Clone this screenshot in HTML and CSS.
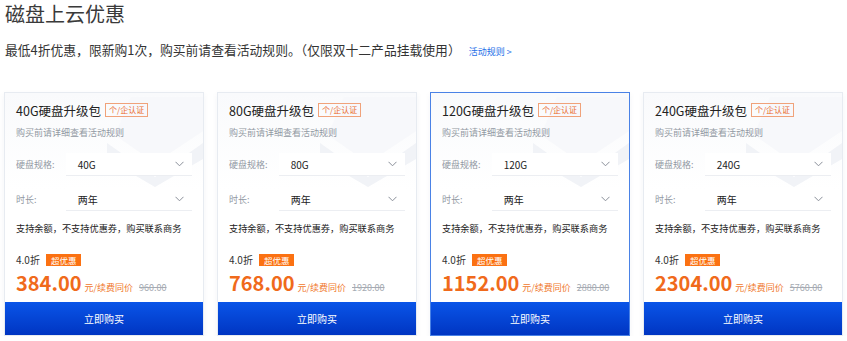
FILE: index.html
```html
<!DOCTYPE html>
<html lang="zh-CN">
<head>
    <meta charset="UTF-8">
    <title>磁盘上云优惠</title>
    <link rel="stylesheet" href="styles.css">
</head>
<body>
    <h1 class="page-title">磁盘上云优惠</h1>
    <p class="page-desc">最低4折优惠，限新购1次，购买前请查看活动规则。（仅限双十二产品挂载使用）<a class="rule-link" href="#">活动规则 &gt;</a></p>

    <div class="card-list">
        <!-- 40G -->
        <div class="card">
            <svg class="card-deco" width="96" height="90" viewBox="0 0 96 90"><path d="M0 46 L48 80 L96 46 L96 62 L48 90 L0 62 Z" fill="#f1f3f7"/><path d="M24 0 L96 0 L96 34 L48 66 L8 38 Z" fill="#f7f8fb"/></svg>
            <div class="card-body">
                <div class="card-head"><span class="card-name">40G硬盘升级包</span><span class="auth-tag">个/企认证</span></div>
                <div class="card-sub">购买前请详细查看活动规则</div>
                <div class="field"><span class="field-label">硬盘规格:</span><div class="select"><span>40G</span><svg class="chevron" width="9" height="6" viewBox="0 0 9 6"><path d="M0.5 0.8 L4.5 4.8 L8.5 0.8" fill="none" stroke="#8a8f99" stroke-width="1"/></svg></div></div>
                <div class="field"><span class="field-label">时长:</span><div class="select"><span>两年</span><svg class="chevron" width="9" height="6" viewBox="0 0 9 6"><path d="M0.5 0.8 L4.5 4.8 L8.5 0.8" fill="none" stroke="#8a8f99" stroke-width="1"/></svg></div></div>
                <div class="card-note">支持余额，不支持优惠券，购买联系商务</div>
                <div class="discount"><span>4.0折</span><span class="hot-tag">超优惠</span></div>
                <div class="price-row"><span class="price">384.00</span><span class="unit">元/续费同价</span><span class="old-price">960.00</span></div>
            </div>
            <button class="buy-btn">立即购买</button>
        </div>

        <!-- 80G -->
        <div class="card">
            <svg class="card-deco" width="96" height="90" viewBox="0 0 96 90"><path d="M0 46 L48 80 L96 46 L96 62 L48 90 L0 62 Z" fill="#f1f3f7"/><path d="M24 0 L96 0 L96 34 L48 66 L8 38 Z" fill="#f7f8fb"/></svg>
            <div class="card-body">
                <div class="card-head"><span class="card-name">80G硬盘升级包</span><span class="auth-tag">个/企认证</span></div>
                <div class="card-sub">购买前请详细查看活动规则</div>
                <div class="field"><span class="field-label">硬盘规格:</span><div class="select"><span>80G</span><svg class="chevron" width="9" height="6" viewBox="0 0 9 6"><path d="M0.5 0.8 L4.5 4.8 L8.5 0.8" fill="none" stroke="#8a8f99" stroke-width="1"/></svg></div></div>
                <div class="field"><span class="field-label">时长:</span><div class="select"><span>两年</span><svg class="chevron" width="9" height="6" viewBox="0 0 9 6"><path d="M0.5 0.8 L4.5 4.8 L8.5 0.8" fill="none" stroke="#8a8f99" stroke-width="1"/></svg></div></div>
                <div class="card-note">支持余额，不支持优惠券，购买联系商务</div>
                <div class="discount"><span>4.0折</span><span class="hot-tag">超优惠</span></div>
                <div class="price-row"><span class="price">768.00</span><span class="unit">元/续费同价</span><span class="old-price">1920.00</span></div>
            </div>
            <button class="buy-btn">立即购买</button>
        </div>

        <!-- 120G (选中) -->
        <div class="card active">
            <svg class="card-deco" width="96" height="90" viewBox="0 0 96 90"><path d="M0 46 L48 80 L96 46 L96 62 L48 90 L0 62 Z" fill="#f1f3f7"/><path d="M24 0 L96 0 L96 34 L48 66 L8 38 Z" fill="#f7f8fb"/></svg>
            <div class="card-body">
                <div class="card-head"><span class="card-name">120G硬盘升级包</span><span class="auth-tag">个/企认证</span></div>
                <div class="card-sub">购买前请详细查看活动规则</div>
                <div class="field"><span class="field-label">硬盘规格:</span><div class="select"><span>120G</span><svg class="chevron" width="9" height="6" viewBox="0 0 9 6"><path d="M0.5 0.8 L4.5 4.8 L8.5 0.8" fill="none" stroke="#8a8f99" stroke-width="1"/></svg></div></div>
                <div class="field"><span class="field-label">时长:</span><div class="select"><span>两年</span><svg class="chevron" width="9" height="6" viewBox="0 0 9 6"><path d="M0.5 0.8 L4.5 4.8 L8.5 0.8" fill="none" stroke="#8a8f99" stroke-width="1"/></svg></div></div>
                <div class="card-note">支持余额，不支持优惠券，购买联系商务</div>
                <div class="discount"><span>4.0折</span><span class="hot-tag">超优惠</span></div>
                <div class="price-row"><span class="price">1152.00</span><span class="unit">元/续费同价</span><span class="old-price">2880.00</span></div>
            </div>
            <button class="buy-btn">立即购买</button>
        </div>

        <!-- 240G -->
        <div class="card">
            <svg class="card-deco" width="96" height="90" viewBox="0 0 96 90"><path d="M0 46 L48 80 L96 46 L96 62 L48 90 L0 62 Z" fill="#f1f3f7"/><path d="M24 0 L96 0 L96 34 L48 66 L8 38 Z" fill="#f7f8fb"/></svg>
            <div class="card-body">
                <div class="card-head"><span class="card-name">240G硬盘升级包</span><span class="auth-tag">个/企认证</span></div>
                <div class="card-sub">购买前请详细查看活动规则</div>
                <div class="field"><span class="field-label">硬盘规格:</span><div class="select"><span>240G</span><svg class="chevron" width="9" height="6" viewBox="0 0 9 6"><path d="M0.5 0.8 L4.5 4.8 L8.5 0.8" fill="none" stroke="#8a8f99" stroke-width="1"/></svg></div></div>
                <div class="field"><span class="field-label">时长:</span><div class="select"><span>两年</span><svg class="chevron" width="9" height="6" viewBox="0 0 9 6"><path d="M0.5 0.8 L4.5 4.8 L8.5 0.8" fill="none" stroke="#8a8f99" stroke-width="1"/></svg></div></div>
                <div class="card-note">支持余额，不支持优惠券，购买联系商务</div>
                <div class="discount"><span>4.0折</span><span class="hot-tag">超优惠</span></div>
                <div class="price-row"><span class="price">2304.00</span><span class="unit">元/续费同价</span><span class="old-price">5760.00</span></div>
            </div>
            <button class="buy-btn">立即购买</button>
        </div>
    </div>
</body>
</html>
```

FILE: styles.css
```css
/* 基础样式 */
body {
    margin: 0;
    padding: 0 3px 0 4px;
    background: #fff;
    font-family: "Noto Sans CJK SC", "Noto Sans", sans-serif;
    color: #333;
}

.page-title {
    margin: 0;
    padding: 2px 0 0 1px;
    font-size: 20px;
    font-weight: 400;
    line-height: 24px;
    color: #3a3a3a;
}

.page-desc {
    margin: 14px 0 0;
    padding-left: 1px;
    font-size: 12.8px;
    line-height: 20px;
    color: #333;
}

.rule-link {
    margin-left: 8px;
    font-size: 9px;
    color: #1c6fe8;
    text-decoration: none;
}

/* 卡片列表 */
.card-list {
    display: grid;
    grid-template-columns: repeat(4, 200px);
    gap: 13px;
    margin-top: 30px;
}

.card {
    position: relative;
    display: flex;
    flex-direction: column;
    height: 244px;
    border: 1px solid #e7ebf1;
    background: linear-gradient(180deg, #f9fafc 0%, #fff 40%);
    box-shadow: 0 2px 6px rgba(30, 50, 90, 0.05);
    box-sizing: border-box;
    overflow: hidden;
}

.card.active {
    border-color: #4a82e6;
}

.card-deco {
    position: absolute;
    top: 4px;
    right: 0;
}

.card-body {
    position: relative;
    flex: 1;
    padding: 8px 11px 0 11px;
}

.card-head {
    display: flex;
    align-items: center;
    height: 18px;
}

.card-name {
    font-size: 12.5px;
    color: #222;
}

.auth-tag {
    margin-left: 4px;
    padding: 0 3px;
    border: 1px solid #f0a27a;
    font-size: 8px;
    line-height: 12px;
    color: #ea6a2c;
}

.card-sub {
    margin-top: 7px;
    font-size: 9px;
    line-height: 14px;
    color: #9299a3;
}

.field {
    display: flex;
    align-items: center;
    margin-top: 13px;
}

.field + .field {
    margin-top: 12px;
}

.field-label {
    width: 50px;
    font-size: 9px;
    color: #9299a3;
}

.select {
    display: flex;
    align-items: center;
    justify-content: space-between;
    width: 127px;
    height: 23px;
    padding: 0 8px 0 12px;
    box-sizing: border-box;
    background: #fff;
    border-bottom: 1px solid #eceef2;
    font-size: 10px;
    color: #222;
}

.card-note {
    margin-top: 11px;
    font-size: 9.2px;
    line-height: 12px;
    color: #222;
}

.discount {
    display: flex;
    align-items: center;
    margin-top: 18px;
    font-size: 10px;
    color: #333;
}

.hot-tag {
    margin-left: 6px;
    padding: 0 5px;
    background: #fb7112;
    font-size: 8.5px;
    line-height: 12px;
    color: #fff;
}

.price-row {
    display: flex;
    align-items: baseline;
    margin-top: 1px;
}

.price {
    font-size: 20px;
    font-weight: 700;
    color: #f06a1b;
}

.unit {
    margin-left: 3px;
    font-size: 9px;
    color: #f0772c;
}

.old-price {
    margin-left: 6px;
    font-size: 9px;
    color: #a6abb3;
    text-decoration: line-through;
}

.buy-btn {
    height: 33px;
    border: none;
    background: linear-gradient(180deg, #0a55e8 0%, #0035c2 100%);
    font-family: inherit;
    font-size: 10px;
    color: #fff;
    cursor: pointer;
}
```
